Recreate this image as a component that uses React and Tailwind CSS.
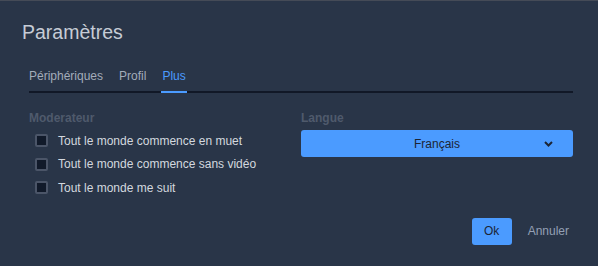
import React from "react";

function Checkbox({ label }) {
  return (
    <label className="flex items-center h-[23.5px]">
      <span className="ml-[6px] w-[13px] h-[13px] rounded-[2px] border-2 border-[#4b5568] bg-[#111a2a] box-border" />
      <span className="ml-[10px] text-[12px] text-[#d3d8df]">{label}</span>
    </label>
  );
}

export default function App() {
  return (
    <div
      className="w-[598px] h-[266px] bg-[#293548] border-t border-[#454b57] box-border overflow-hidden"
      style={{ fontFamily: '"Liberation Sans", Arial, sans-serif' }}
    >
      <div className="pl-[22px] pt-[19px] text-[19.5px] leading-[24px] text-[#c6ccd6]">Paramètres</div>
      <div className="ml-[29px] mr-[25px] mt-[24px] flex border-b-2 border-[#111827] text-[12px] leading-[14px] h-[22px] pt-[1px] box-content">
        <div className="text-[#a3acba]">Périphériques</div>
        <div className="ml-[16px] text-[#a3acba]">Profil</div>
        <div className="ml-[15px] relative text-[#4b9bff] px-[1px] h-[22px]">
          Plus
          <span className="absolute left-0 right-0 -bottom-[2px] h-[2px] bg-[#4b9bff]" />
        </div>
      </div>
      <div className="ml-[29px] mr-[25px] mt-[18px] flex">
        <div className="w-[272px]">
          <div className="text-[12px] font-bold text-[#4f5a6c] leading-[14px]">Moderateur</div>
          <div className="mt-[4px] flex flex-col">
            <Checkbox label="Tout le monde commence en muet" />
            <Checkbox label="Tout le monde commence sans vidéo" />
            <Checkbox label="Tout le monde me suit" />
          </div>
        </div>
        <div className="flex-1">
          <div className="text-[12px] font-bold text-[#4f5a6c] leading-[14px]">Langue</div>
          <div className="mt-[5px] h-[27px] rounded-[3px] bg-[#4b9bff] flex items-center relative">
            <span className="flex-1 text-center text-[12px] text-[#1c2535]">Français</span>
            <svg className="absolute right-[20px]" width="9" height="6" viewBox="0 0 9 6">
              <path d="M1 1l3.5 3.5L8 1" stroke="#1c2535" strokeWidth="2" fill="none" />
            </svg>
          </div>
        </div>
      </div>
      <div className="mt-[18px] mr-[29px] flex justify-end items-center">
        <button className="w-[40px] h-[27px] rounded-[3px] bg-[#4b9bff] text-[12px] text-[#1c2535]">Ok</button>
        <span className="ml-[16px] text-[12px] text-[#94a0b4]">Annuler</span>
      </div>
    </div>
  );
}
